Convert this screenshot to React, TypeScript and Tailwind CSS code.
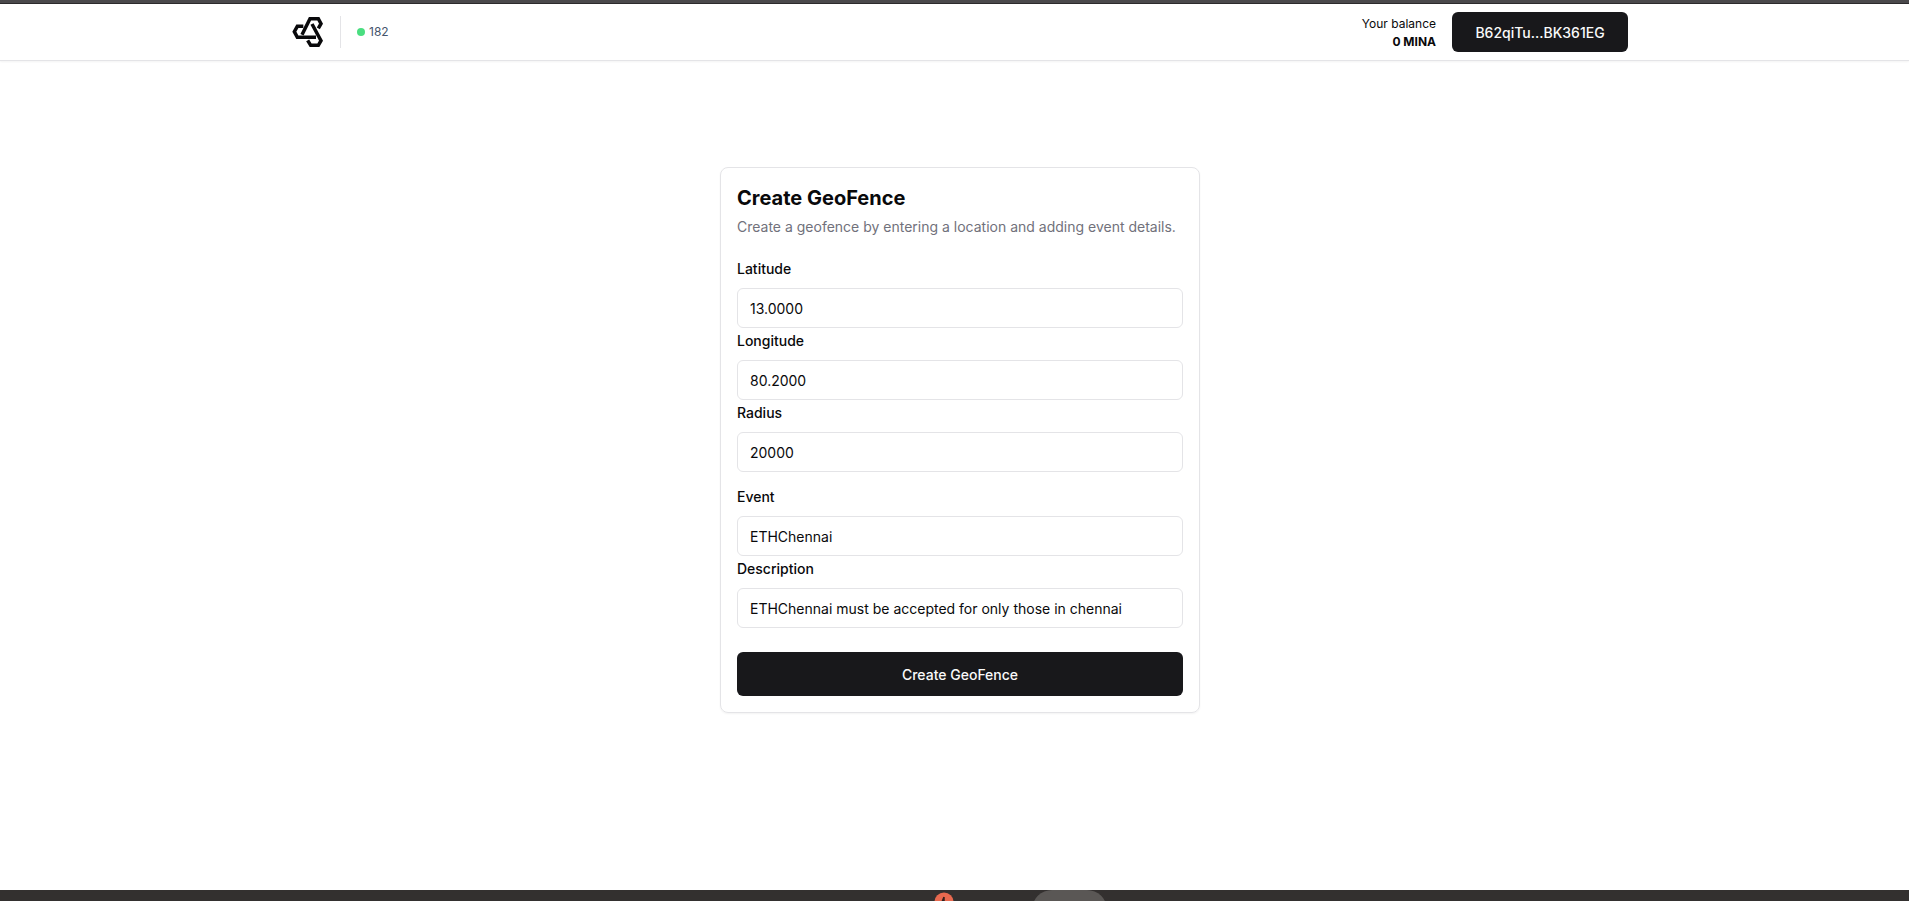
import { useState } from 'react';

const locationFields = [
  { id: 'latitude', label: 'Latitude', value: '13.0000' },
  { id: 'longitude', label: 'Longitude', value: '80.2000' },
  { id: 'radius', label: 'Radius', value: '20000' },
];

const eventFields = [
  { id: 'event', label: 'Event', value: 'ETHChennai' },
  { id: 'description', label: 'Description', value: 'ETHChennai must be accepted for only those in chennai' },
];

function Logo() {
  return (
    <svg className="size-8" viewBox="0 0 96 96" fill="none" stroke="#09090b" strokeWidth="10.5">
      <path d="M30 56 L54 8 H79 L87 23 L79 37" />
      <path d="M34 31 H16 L7 47 L16 64 H72" />
      <path d="M60 24 L87 74 L79 88 H56 L47 73" />
    </svg>
  );
}

function Field({ id, label, value }: { id: string; label: string; value: string }) {
  const [text, setText] = useState(value);

  return (
    <div className="space-y-[7px]">
      <label htmlFor={id} className="block pt-px text-sm/6 font-medium">{label}</label>
      <input
        id={id}
        name={id}
        value={text}
        onChange={e => setText(e.target.value)}
        className="block h-10 w-full rounded-md border border-zinc-200 bg-white px-3 text-sm"
      />
    </div>
  );
}

export default function App() {
  return (
    <div className="min-h-screen flex flex-col bg-white text-zinc-950 font-[Inter,sans-serif]">
      <div className="h-1 shrink-0 bg-[#4a494b] border-b border-[#2b2a2c]" />

      <header className="border-b border-zinc-200 shadow-xs pl-[11px]">
        <div className="mx-auto max-w-[1400px] px-8 py-2 flex items-center justify-between">
          <div className="flex items-center gap-4">
            <a href="#" aria-label="Home"><Logo /></a>
            <div className="h-8 w-px bg-zinc-200" />
            <div className="flex items-center gap-1 text-xs text-slate-600">
              <span className="size-2 rounded-full bg-[#4ade80]" />
              <span>182</span>
            </div>
          </div>
          <div className="flex items-center gap-4">
            <div className="pt-0.5 text-right text-xs/[18px]">
              <p>Your balance</p>
              <p className="font-bold">0 MINA</p>
            </div>
            <button className="h-10 w-44 rounded-md bg-zinc-900 pt-0.5 text-sm font-medium text-zinc-50">B62qiTu...BK361EG</button>
          </div>
        </div>
      </header>

      <main className="grow pt-[106px] pb-16 pl-[11px]">
        <form className="mx-auto max-w-[480px] rounded-lg border border-zinc-200 p-4 shadow-xs" onSubmit={e => e.preventDefault()}>
          <h1 className="text-xl font-bold">Create GeoFence</h1>
          <p className="mt-[5px] mb-[19px] text-sm text-zinc-500">Create a geofence by entering a location and adding event details.</p>

          {/* Location */}
          {locationFields.map(field => <Field key={field.id} {...field} />)}

          {/* Event details */}
          <div className="mt-3">
            {eventFields.map(field => <Field key={field.id} {...field} />)}
          </div>

          <button type="submit" className="mt-6 h-11 w-full rounded-md bg-zinc-900 pt-0.5 text-sm font-medium text-zinc-50">Create GeoFence</button>
        </form>
      </main>

      <footer className="h-[11px] shrink-0 overflow-hidden bg-[#33302f] flex items-start justify-center gap-[78px] pl-[131px]">
        <svg className="mt-0.5 size-5 shrink-0" viewBox="0 0 20 20">
          <circle cx="10" cy="10" r="9.5" fill="#e8694f" />
          <path d="M10 5 L8 10 M10 5 V10" stroke="#33201d" strokeWidth="1.5" />
        </svg>
        <div className="h-10 w-[75px] shrink-0 rounded-full bg-[#5a5755]" />
      </footer>
    </div>
  );
}
